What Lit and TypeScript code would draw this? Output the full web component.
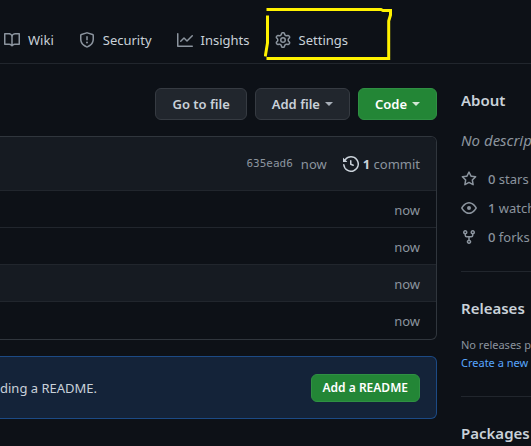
import { LitElement, html, css, svg } from "lit";
import { customElement, property } from "lit/decorators.js";

const ICONS: Record<string, string> = {
  book: "M0 1.75A.75.75 0 01.75 1h4.253c1.227 0 2.317.59 3 1.501A3.744 3.744 0 0111.006 1h4.245a.75.75 0 01.75.75v10.5a.75.75 0 01-.75.75h-4.507a2.25 2.25 0 00-1.591.659l-.622.621a.75.75 0 01-1.06 0l-.622-.621A2.25 2.25 0 005.258 13H.75a.75.75 0 01-.75-.75V1.75zm8.755 3a2.25 2.25 0 012.25-2.25H14.5v9h-3.757c-.71 0-1.4.201-1.992.572l.004-7.322zm-1.504 7.324l.004-5.073-.002-2.253A2.25 2.25 0 005.003 2.5H1.5v9h3.757a3.75 3.75 0 011.994.574z",
  shield: "M7.467.133a1.75 1.75 0 011.066 0l5.25 1.68A1.75 1.75 0 0115 3.48V7c0 1.566-.32 3.182-1.303 4.682-.983 1.498-2.585 2.813-5.032 3.855a1.7 1.7 0 01-1.33 0c-2.447-1.042-4.049-2.357-5.032-3.855C1.32 10.182 1 8.566 1 7V3.48a1.75 1.75 0 011.217-1.667l5.25-1.68zm.61 1.429a.25.25 0 00-.153 0l-5.25 1.68a.25.25 0 00-.174.238V7c0 1.358.275 2.666 1.057 3.86.784 1.194 2.121 2.34 4.366 3.297a.2.2 0 00.154 0c2.245-.956 3.582-2.104 4.366-3.298C13.225 9.666 13.5 8.36 13.5 7V3.48a.25.25 0 00-.174-.237l-5.25-1.68zM9 10.5a1 1 0 11-2 0 1 1 0 012 0zm-.25-5.75a.75.75 0 10-1.5 0v3a.75.75 0 001.5 0v-3z",
  graph: "M1.5 1.75a.75.75 0 00-1.5 0v12.5c0 .414.336.75.75.75h14.5a.75.75 0 000-1.5H1.5V1.75zm14.28 2.53a.75.75 0 00-1.06-1.06L10 7.94 7.53 5.47a.75.75 0 00-1.06 0L3.22 8.72a.75.75 0 001.06 1.06L7 7.06l2.47 2.47a.75.75 0 001.06 0l5.25-5.25z",
  gear: "M7.429 1.525a6.593 6.593 0 011.142 0c.036.003.108.036.137.146l.289 1.105c.147.56.55.967.997 1.189.174.086.341.183.501.29.417.278.97.423 1.53.27l1.102-.303c.11-.03.175.016.195.046.219.31.41.641.573.989.014.031.022.11-.059.19l-.815.806c-.411.406-.562.957-.53 1.456a4.588 4.588 0 010 .582c-.032.499.119 1.05.53 1.456l.815.806c.08.08.073.159.059.19a6.494 6.494 0 01-.573.99c-.02.029-.086.074-.195.045l-1.103-.303c-.559-.153-1.112-.008-1.529.27-.16.107-.327.204-.5.29-.449.222-.851.628-.998 1.189l-.289 1.105c-.029.11-.101.143-.137.146a6.613 6.613 0 01-1.142 0c-.036-.003-.108-.037-.137-.146l-.289-1.105c-.147-.56-.55-.967-.997-1.189a4.502 4.502 0 01-.501-.29c-.417-.278-.97-.423-1.53-.27l-1.102.303c-.11.03-.175-.016-.195-.046a6.492 6.492 0 01-.573-.989c-.014-.031-.022-.11.059-.19l.815-.806c.411-.406.562-.957.53-1.456a4.587 4.587 0 010-.582c.032-.499-.119-1.05-.53-1.456l-.815-.806c-.08-.08-.073-.159-.059-.19a6.44 6.44 0 01.573-.99c.02-.029.086-.075.195-.045l1.103.303c.559.153 1.112.008 1.529-.27.16-.107.327-.204.5-.29.449-.222.851-.628.998-1.189l.289-1.105c.029-.11.101-.143.137-.146zM8 0c-.236 0-.47.01-.701.03-.743.065-1.29.615-1.458 1.261l-.29 1.106c-.017.066-.078.158-.211.224a5.994 5.994 0 00-.668.386c-.123.082-.233.09-.3.071L3.27 2.776c-.644-.177-1.392.02-1.82.63a7.977 7.977 0 00-.704 1.217c-.315.675-.111 1.422.363 1.891l.815.806c.05.048.098.147.088.294a6.084 6.084 0 000 .772c.01.147-.038.246-.088.294l-.815.806c-.474.469-.678 1.216-.363 1.891.2.428.436.835.704 1.218.428.609 1.176.806 1.82.63l1.103-.303c.066-.019.176-.011.299.071.213.143.436.272.668.386.133.066.194.158.212.224l.289 1.106c.169.646.715 1.196 1.458 1.26a8.094 8.094 0 001.402 0c.743-.064 1.29-.614 1.458-1.26l.29-1.106c.017-.066.078-.158.211-.224a5.98 5.98 0 00.668-.386c.123-.082.233-.09.3-.071l1.102.302c.644.177 1.392-.02 1.82-.63.268-.382.505-.789.704-1.217.315-.675.111-1.422-.364-1.891l-.814-.806c-.05-.048-.098-.147-.088-.294a6.1 6.1 0 000-.772c-.01-.147.039-.246.088-.294l.814-.806c.475-.469.679-1.216.364-1.891a7.992 7.992 0 00-.704-1.218c-.428-.609-1.176-.806-1.82-.63l-1.103.303c-.066.019-.176.011-.299-.071a5.991 5.991 0 00-.668-.386c-.133-.066-.194-.158-.212-.224L10.16 1.29C9.99.645 9.444.095 8.701.031A8.094 8.094 0 008 0zm1.5 8a1.5 1.5 0 11-3 0 1.5 1.5 0 013 0zM11 8a3 3 0 11-6 0 3 3 0 016 0z",
  history: "M1.643 3.143L.427 1.927A.25.25 0 000 2.104V5.75c0 .138.112.25.25.25h3.646a.25.25 0 00.177-.427L2.715 4.215a6.5 6.5 0 11-1.18 4.458.75.75 0 10-1.493.154 8.001 8.001 0 101.6-5.684zM7.75 4a.75.75 0 01.75.75v2.992l2.028.812a.75.75 0 01-.557 1.392l-2.5-1A.75.75 0 017 8.25v-3.5A.75.75 0 017.75 4z",
  star: "M8 .25a.75.75 0 01.673.418l1.882 3.815 4.21.612a.75.75 0 01.416 1.279l-3.046 2.97.719 4.192a.75.75 0 01-1.088.791L8 12.347l-3.766 1.98a.75.75 0 01-1.088-.79l.72-4.194L.818 6.374a.75.75 0 01.416-1.28l4.21-.611L7.327.668A.75.75 0 018 .25zm0 2.445L6.615 5.5a.75.75 0 01-.564.41l-3.097.45 2.24 2.184a.75.75 0 01.216.664l-.528 3.084 2.769-1.456a.75.75 0 01.698 0l2.77 1.456-.53-3.084a.75.75 0 01.216-.664l2.24-2.183-3.096-.45a.75.75 0 01-.564-.41L8 2.694v.001z",
  eye: "M1.679 7.932c.412-.621 1.242-1.75 2.366-2.717C5.175 4.242 6.527 3.5 8 3.5c1.473 0 2.824.742 3.955 1.715 1.124.967 1.954 2.096 2.366 2.717a.119.119 0 010 .136c-.412.621-1.242 1.75-2.366 2.717C10.825 11.758 9.473 12.5 8 12.5c-1.473 0-2.824-.742-3.955-1.715C2.92 9.818 2.09 8.69 1.679 8.068a.119.119 0 010-.136zM8 2c-1.981 0-3.67.992-4.933 2.078C1.797 5.169.88 6.423.43 7.1a1.619 1.619 0 000 1.798c.45.678 1.367 1.932 2.637 3.024C4.329 13.008 6.019 14 8 14c1.981 0 3.67-.992 4.933-2.078 1.27-1.091 2.187-2.345 2.637-3.023a1.619 1.619 0 000-1.798c-.45-.678-1.367-1.932-2.637-3.023C11.671 2.992 9.981 2 8 2zm0 8a2 2 0 100-4 2 2 0 000 4z",
  fork: "M5 3.25a.75.75 0 11-1.5 0 .75.75 0 011.5 0zm0 2.122a2.25 2.25 0 10-1.5 0v.878A2.25 2.25 0 005.75 8.5h1.5v2.128a2.251 2.251 0 101.5 0V8.5h1.5a2.25 2.25 0 002.25-2.25v-.878a2.25 2.25 0 10-1.5 0v.878a.75.75 0 01-.75.75h-4.5A.75.75 0 015 6.25v-.878zm3.75 7.378a.75.75 0 11-1.5 0 .75.75 0 011.5 0zm3-8.75a.75.75 0 100-1.5.75.75 0 000 1.5z",
};

@customElement("oct-icon")
class OctIcon extends LitElement {
  @property() name = "book";

  static styles = css`
    :host {
      display: block;
      flex: none;
      width: 16px;
      height: 16px;
    }
    .glyph {
      display: block;
      fill: currentColor;
    }
  `;

  render() {
    return html`<svg class="glyph" width="16" height="16" viewBox="0 0 16 16" aria-hidden="true">
      ${svg`<path fill-rule="evenodd" d=${ICONS[this.name]}></path>`}
    </svg>`;
  }
}

@customElement("app-root")
class AppRoot extends LitElement {
  static styles = css`
    :host {
      display: block;
      min-height: 100vh;
      overflow: hidden;
      background: #0d1117;
      color: #c9d1d9;
      font: 13px/20px "Noto Sans", "Open Sans", sans-serif;
      white-space: nowrap;
    }
    * {
      box-sizing: border-box;
    }
    a {
      color: inherit;
      text-decoration: none;
    }
    .tabs {
      display: flex;
      gap: 25px;
      padding: 16px 4px 0;
      height: 64px;
      border-bottom: 1px solid #21262d;
    }
    .tab {
      position: relative;
      display: flex;
      align-items: center;
      gap: 8px;
    }
    .tab oct-icon,
    .facts oct-icon {
      color: #8b949e;
    }
    .marker {
      position: absolute;
      left: -11px;
      top: -16px;
      fill: none;
      stroke: #fff200;
      stroke-width: 3;
      stroke-linecap: square;
      pointer-events: none;
    }
    .page {
      display: grid;
      grid-template-columns: minmax(0, 1fr) 70px;
      gap: 24px;
      padding-top: 24px;
    }
    .actions {
      display: flex;
      justify-content: flex-end;
      gap: 8px;
      margin-bottom: 16px;
    }
    .btn {
      display: flex;
      align-items: center;
      gap: 5px;
      height: 32px;
      padding: 0 16px;
      border: 1px solid #363b42;
      border-radius: 6px;
      background: #21262d;
      color: #c9d1d9;
      font: inherit;
      font-weight: 600;
    }
    .primary {
      background: #238636;
      border-color: #2f9043;
      color: #ffffff;
    }
    .small {
      height: 28px;
      padding: 0 11px;
      font-size: 12px;
    }
    .caret {
      border: 4px solid transparent;
      border-top-color: currentColor;
      border-bottom: 0;
      opacity: 0.8;
    }
    .files {
      margin-bottom: 16px;
      border: 1px solid #30363d;
      border-left: 0;
      border-radius: 0 6px 6px 0;
      color: #8b949e;
      overflow: hidden;
    }
    .latest {
      display: flex;
      align-items: center;
      justify-content: flex-end;
      height: 53px;
      padding-right: 16px;
      background: #161b22;
    }
    .sha {
      margin-right: 8px;
      font: 11px/20px "DejaVu Sans Mono", monospace;
    }
    .commits {
      display: flex;
      align-items: center;
      gap: 4px;
      margin-left: 16px;
    }
    .commits oct-icon,
    .commits strong {
      color: #c9d1d9;
    }
    .rows {
      width: 100%;
      border-collapse: collapse;
    }
    .age {
      height: 37px;
      padding: 2px 16px 0 0;
      border-top: 1px solid #21262d;
      text-align: right;
    }
    .hovered {
      background: #161b22;
    }
    .readme {
      display: flex;
      align-items: center;
      justify-content: space-between;
      padding: 17px 16px 16px 0;
      border: 1px solid #1c4a85;
      border-left: 0;
      border-radius: 0 6px 6px 0;
      background: #142339;
    }
    .side {
      overflow: hidden;
    }
    .group {
      padding-bottom: 24px;
      margin-bottom: 24px;
      border-bottom: 1px solid #21262d;
    }
    .group:last-child {
      margin: 0;
      padding: 0;
      border: 0;
    }
    h2 {
      margin: 0 0 16px;
      font-size: 15px;
      line-height: 24px;
      font-weight: 600;
    }
    .group:last-child h2 {
      margin: 0;
    }
    .blurb {
      margin: 0 0 17px;
      font-size: 15px;
      line-height: 24px;
      font-style: italic;
      color: #8b949e;
    }
    .facts {
      display: grid;
      gap: 9px;
      margin: 0;
      padding: 0;
      list-style: none;
      color: #8b949e;
    }
    .fact {
      display: flex;
      align-items: center;
      gap: 11px;
    }
    .facts strong {
      font-weight: 500;
    }
    .note {
      font-size: 11px;
      line-height: 18px;
      color: #8b949e;
    }
    .create {
      display: block;
      color: #58a6ff;
    }
  `;

  render() {
    const tabs = [
      ["book", "Wiki"],
      ["shield", "Security"],
      ["graph", "Insights"],
      ["gear", "Settings"],
    ];
    const facts = [
      ["star", "0", "stars"],
      ["eye", "1", "watching"],
      ["fork", "0", "forks"],
    ];
    return html`
      <nav class="tabs">
        ${tabs.map(
          ([icon, label]) => html`<a class="tab" href="#">
            <oct-icon name=${icon}></oct-icon>${label}
            ${label === "Settings"
              ? html`<svg class="marker" width="130" height="64" viewBox="264 0 130 64" aria-hidden="true">
                  <path d="M268 9.5H381L383 10.5H390.5V15L388.7 21V58.5H268M267.5 17V43L265.5 55"></path>
                </svg>`
              : ""}
          </a>`
        )}
      </nav>
      <div class="page">
        <main>
          <div class="actions">
            <button class="btn">Go to file</button>
            <button class="btn">Add file<span class="caret"></span></button>
            <button class="btn primary">Code<span class="caret"></span></button>
          </div>
          <section class="files">
            <div class="latest">
              <a class="sha" href="#">635ead6</a>
              <a href="#">now</a>
              <a class="commits" href="#">
                <oct-icon name="history"></oct-icon><span><strong>1</strong> commit</span>
              </a>
            </div>
            <table class="rows">
              <tbody>
                ${[0, 1, 2, 3].map(
                  (row) => html`<tr class=${row === 2 ? "hovered" : ""}>
                    <td class="age">now</td>
                  </tr>`
                )}
              </tbody>
            </table>
          </section>
          <section class="readme">
            <span>ding a README.</span>
            <button class="btn primary small">Add a README</button>
          </section>
        </main>
        <aside class="side">
          <section class="group">
            <h2>About</h2>
            <p class="blurb">No description</p>
            <ul class="facts">
              ${facts.map(
                ([icon, count, label]) => html`<li class="fact">
                  <oct-icon name=${icon}></oct-icon><span><strong>${count}</strong> ${label}</span>
                </li>`
              )}
            </ul>
          </section>
          <section class="group">
            <h2>Releases</h2>
            <div class="note">No releases published<a class="create" href="#">Create a new release</a></div>
          </section>
          <section class="group">
            <h2>Packages</h2>
          </section>
        </aside>
      </div>
    `;
  }
}
